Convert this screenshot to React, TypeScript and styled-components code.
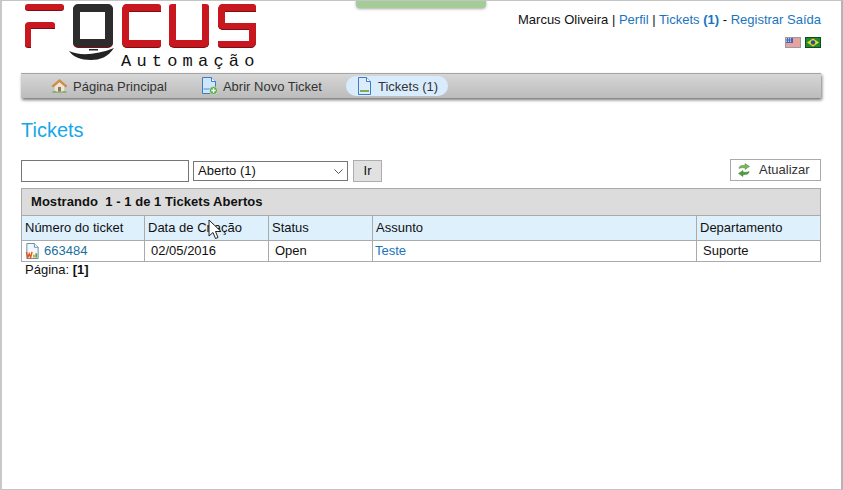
import styled, { createGlobalStyle } from "styled-components";

const GlobalStyle = createGlobalStyle`
  html, body {
    margin: 0;
    padding: 0;
    background: #fff;
  }
  body {
    font-family: "Liberation Sans", Arial, sans-serif;
    font-size: 13px;
    color: #111;
  }
`;

const Frame = styled.div`
  position: relative;
  box-sizing: border-box;
  width: 843px;
  height: 490px;
  overflow: hidden;
  background: #fff;
  border-top: 1px solid #c4c4c4;
  border-bottom: 1px solid #c4c4c4;
  border-left: 2px solid #c8c8c8;
  border-right: 2px solid #b4b4b4;
  padding: 0 20px 0 19px;
`;

const GreenTab = styled.div`
  position: absolute;
  left: 354px;
  top: -1px;
  width: 130px;
  height: 8px;
  background: #a3cc96;
  border-radius: 0 0 4px 4px;
  box-shadow: 0 1px 3px rgba(0, 0, 0, 0.35);
`;

const Header = styled.header`
  display: flex;
  justify-content: space-between;
  height: 72px;
`;

const Logo = styled.div`
  width: 231px;
  margin-left: 4px;
  padding-top: 3px;
`;

const LogoLetters = styled.div`
  display: flex;
  justify-content: space-between;
  height: 43px;
  filter: drop-shadow(0 1px 0 #7c0d12);
`;

const RED = "#c9171f";

const LetterF = styled.div`
  width: 39px;
  display: flex;
  flex-direction: column;
  justify-content: space-between;
`;

const FTop = styled.div`
  height: 6px;
  background: ${RED};
  border-radius: 3px;
`;

const FBottom = styled.div`
  box-sizing: border-box;
  width: 30px;
  height: 25px;
  border-top: 6px solid ${RED};
  border-left: 6px solid ${RED};
  border-radius: 4px 3px 0 3px;
`;

const Monitor = styled.div`
  box-sizing: border-box;
  width: 40px;
  height: 43px;
  background: #fff;
  border: solid #2c2c2c;
  border-width: 8px 8px 8px 7px;
  border-radius: 5px;
`;

const LetterC = styled.div`
  box-sizing: border-box;
  width: 39px;
  border: solid ${RED};
  border-width: 7px 0 7px 7px;
  border-radius: 5px 3px 3px 5px;
`;

const LetterU = styled.div`
  box-sizing: border-box;
  width: 40px;
  border: solid ${RED};
  border-width: 0 7px 7px 7px;
  border-radius: 3px 3px 5px 5px;
`;

const LetterS = styled.div`
  width: 38px;
  display: flex;
  flex-direction: column;
`;

const SUpper = styled.div`
  box-sizing: border-box;
  height: 25px;
  border: solid ${RED};
  border-width: 7px 0 6px 7px;
  border-radius: 5px 3px 0 5px;
`;

const SLower = styled.div`
  box-sizing: border-box;
  height: 18px;
  border: solid ${RED};
  border-width: 0 7px 6px 0;
  border-radius: 0 0 5px 3px;
`;

const LogoBottom = styled.div`
  display: flex;
  align-items: flex-start;
  margin-left: 43px;
  margin-top: 1px;
  gap: 6px;
`;

const Swoosh = styled.svg`
  flex: none;
  margin-top: -1px;
`;

const LogoWord = styled.span`
  font-family: "Liberation Mono", monospace;
  font-size: 17px;
  line-height: 17px;
  margin-top: 5px;
  letter-spacing: 5.2px;
  color: #111;
  white-space: nowrap;
`;

const UserBox = styled.div`
  display: flex;
  flex-direction: column;
  align-items: flex-end;
  padding-top: 11px;
  font-size: 13px;
  line-height: 15px;
  white-space: nowrap;
`;

const Flags = styled.div`
  display: flex;
  gap: 4px;
  margin-top: 10px;
`;

const Link = styled.a`
  color: #1a74bd;
  text-decoration: none;
`;

const NavBar = styled.nav`
  display: flex;
  align-items: center;
  box-sizing: border-box;
  height: 25px;
  padding-left: 24px;
  border-top: 1px solid #a5a5a5;
  background: linear-gradient(#d6d6d6, #bcbcbc);
  box-shadow: 1px 2px 3px rgba(0, 0, 0, 0.55);
`;

const NavItem = styled.a<{ $active?: boolean }>`
  display: flex;
  align-items: center;
  gap: ${(p) => (p.$active ? "6px" : "5px")};
  height: 20px;
  margin-right: ${(p) => (p.$active ? "0" : "22px")};
  padding: ${(p) => (p.$active ? "0 10px 0 11px" : "0 6px")};
  margin-left: ${(p) => (p.$active ? "-4px" : "0")};
  border-radius: 10px;
  background: ${(p) => (p.$active ? "#d9ecfd" : "transparent")};
  color: #333;
  font-size: 13px;
  white-space: nowrap;
`;

const PageTitle = styled.h1`
  margin: 20px 0 18px;
  font-size: 20px;
  font-weight: normal;
  line-height: 24px;
  color: #16a7e8;
`;

const Toolbar = styled.form`
  display: flex;
  align-items: center;
  height: 22px;
  margin-bottom: 6px;
`;

const SearchInput = styled.input`
  box-sizing: border-box;
  width: 168px;
  height: 22px;
  margin: 0 4px 0 0;
  padding: 0 4px;
  border: 1px solid #767676;
  background: #fff;
`;

const chevron = encodeURIComponent(
  '<svg xmlns="http://www.w3.org/2000/svg" width="9" height="5" viewBox="0 0 9 5"><path d="M.5.500 4.500 4.500 8.500.5" fill="none" stroke="#555" /></svg>'
);

const StatusSelect = styled.select`
  box-sizing: border-box;
  width: 155px;
  height: 20px;
  margin: 0 5px 0 0;
  padding: 0 0 1px 4px;
  border: 1px solid #767676;
  border-radius: 0;
  appearance: none;
  background: #fff url("data:image/svg+xml,${chevron}") no-repeat right 4px center;
  font-family: inherit;
  font-size: 13px;
  color: #111;
`;

const GoButton = styled.button`
  box-sizing: border-box;
  width: 29px;
  height: 22px;
  padding: 0 0 1px;
  border: 1px solid #adadad;
  background: #e1e1e1;
  font-family: inherit;
  font-size: 13px;
  color: #111;
`;

const RefreshButton = styled.a`
  display: flex;
  align-items: center;
  gap: 8px;
  box-sizing: border-box;
  width: 91px;
  height: 22px;
  margin: -2px 0 0 auto;
  padding: 0 0 1px 6px;
  border: 1px solid #aaa;
  color: #333;
  font-size: 13px;
`;

const TicketTable = styled.table`
  width: 799px;
  table-layout: fixed;
  border-collapse: collapse;
  font-size: 13px;
`;

const CaptionCell = styled.th`
  height: 25px;
  padding: 0 0 1px 9px;
  border: 1px solid #aaa;
  background: #dcdcdc;
  font-weight: bold;
  letter-spacing: 0.05px;
  text-align: left;
  white-space: pre;
`;

const HeadCell = styled.th`
  height: 23px;
  padding: 0 0 1px 3px;
  border: 1px solid #aaa;
  background: #dff0fd;
  font-weight: normal;
  text-align: left;
`;

const BodyCell = styled.td<{ $inset?: boolean }>`
  height: 19px;
  padding: 0 0 1px ${(p) => (p.$inset ? "6px" : "2px")};
  border: 1px solid #aaa;
  line-height: 15px;
  white-space: nowrap;
`;

const TicketLink = styled.a`
  display: flex;
  align-items: center;
  gap: 4px;
  height: 16px;
  padding-left: 1px;
  color: #1b6f9e;
`;

const Pager = styled.div`
  margin: 0 0 0 4px;
  line-height: 15px;
`;

const Cursor = styled.svg`
  position: absolute;
  left: 205px;
  top: 218px;
`;

const HomeIcon = () => (
  <svg width="17" height="16" viewBox="0 0 18 16">
    <path d="M1 8 9 1l8 7-1.500 1L9 3.500 2.500 9Z" fill="#d98f3d" stroke="#b46f2a" strokeWidth=".5" />
    <path d="M4 8.500 9 4.400l5 4.100V14H4Z" fill="#f2e6cf" />
    <rect x="7.400" y="9" width="3.200" height="5" fill="#8a7a68" />
    <path d="M1 15c1-1.600 4-1.600 5-1h6c1-.6 4-.6 5 1Z" fill="#5ea33f" />
  </svg>
);

const NewDocIcon = () => (
  <svg width="17" height="18" viewBox="0 0 17 18">
    <path d="M1.500.5h9l4 4v12h-13Z" fill="#cfe5fa" stroke="#3d7cc0" />
    <path d="M10.500.5v4h4" fill="#fff" stroke="#3d7cc0" />
    <rect x="2.500" y="11" width="8" height="2" fill="#8fbce6" />
    <circle cx="12.500" cy="13.500" r="4" fill="#5dab4a" stroke="#e8f5e2" strokeWidth=".6" />
    <path d="M12.500 11.300v4.400M10.300 13.500h4.400" stroke="#fff" strokeWidth="1.400" />
  </svg>
);

const DocIcon = () => (
  <svg width="15" height="18" viewBox="0 0 15 18">
    <path d="M1.500.5h8l4 4v13h-12Z" fill="#dcecfb" stroke="#3d7cc0" />
    <path d="M9.500.5v4h4" fill="#fff" stroke="#3d7cc0" />
    <rect x="3" y="13" width="9" height="2" fill="#7fae52" />
  </svg>
);

const SheetIcon = () => (
  <svg width="15" height="16" viewBox="0 0 15 17">
    <path d="M1.500.5h8l4 4v12h-12Z" fill="#f3f7fb" stroke="#5d87ad" />
    <path d="M9.500.5v4h4" fill="#fff" stroke="#5d87ad" />
    <path d="M1 9.500l1.500 6 1.500-4 1.500 4 1.500-6" fill="none" stroke="#e2581e" strokeWidth="1.500" />
    <rect x="8" y="12.500" width="2" height="3" fill="#e6a11f" />
    <rect x="10.500" y="11" width="2" height="4.500" fill="#5aa33f" />
  </svg>
);

const RefreshIcon = () => (
  <svg width="14" height="14" viewBox="0 0 14 14">
    <path d="M2 5.500c0-2 1.500-3 3.500-3H8V.5L12.500 3.500 8 6.500V4.700H5.500C4 4.700 3 5 2 5.500Z" fill="#74b85e" stroke="#4d8f3c" strokeWidth=".5" />
    <path d="M12 8.500c0 2-1.500 3-3.500 3H6v2L1.500 10.500 6 7.500v1.800h2.500c1.500 0 2.500-.3 3.500-.8Z" fill="#4f9d41" stroke="#3c7d30" strokeWidth=".5" />
  </svg>
);

const UsFlag = () => (
  <svg width="16" height="11" viewBox="0 0 16 11">
    <rect width="16" height="11" fill="#f3f3f3" />
    <path d="M0 1h16M0 3h16M0 5h16M0 7h16M0 9h16" stroke="#d9534a" strokeWidth="1" />
    <rect width="8" height="6" fill="#4a63b5" />
    <path d="M1 1.500h6M1 3h6M1 4.500h6" stroke="#dfe6f7" strokeWidth=".8" strokeDasharray="1 1" />
    <rect x=".5" y=".5" width="15" height="10" fill="none" stroke="#9a9a9a" />
  </svg>
);

const BrFlag = () => (
  <svg width="16" height="11" viewBox="0 0 16 11">
    <rect width="16" height="11" fill="#1f8a35" />
    <path d="M8 1.500 14 5.500 8 9.500 2 5.500Z" fill="#f2d91e" />
    <circle cx="8" cy="5.500" r="2.300" fill="#2c4f9e" />
    <rect x=".5" y=".5" width="15" height="10" fill="none" stroke="#0f4d1c" />
  </svg>
);

const App = () => {
  return (
    <Frame>
      <GlobalStyle />
      <GreenTab />
      <Header>
        <Logo>
          <LogoLetters>
            <LetterF>
              <FTop />
              <FBottom />
            </LetterF>
            <Monitor />
            <LetterC />
            <LetterU />
            <LetterS>
              <SUpper />
              <SLower />
            </LetterS>
          </LogoLetters>
          <LogoBottom>
            <Swoosh width="47" height="14" viewBox="0 0 47 14">
              <path d="M1 4c10 5 28 4 45-3-6 9-14 12-23 12C13 13 5 10 1 4Z" fill="#222" />
              <path d="M21 2h9v1.500h-9Z" fill="#222" />
            </Swoosh>
            <LogoWord>Automação</LogoWord>
          </LogoBottom>
        </Logo>
        <UserBox>
          <div>
            Marcus Oliveira | <Link href="#">Perfil</Link> | <Link href="#">Tickets <b>(1)</b></Link> - <Link href="#">Registrar Saída</Link>
          </div>
          <Flags>
            <UsFlag />
            <BrFlag />
          </Flags>
        </UserBox>
      </Header>
      <NavBar>
        <NavItem>
          <HomeIcon />
          Página Principal
        </NavItem>
        <NavItem>
          <NewDocIcon />
          Abrir Novo Ticket
        </NavItem>
        <NavItem $active>
          <DocIcon />
          Tickets (1)
        </NavItem>
      </NavBar>
      <PageTitle>Tickets</PageTitle>
      <Toolbar>
        <SearchInput type="text" />
        <StatusSelect defaultValue="open">
          <option value="open">Aberto (1)</option>
        </StatusSelect>
        <GoButton type="button">Ir</GoButton>
        <RefreshButton>
          <RefreshIcon />
          Atualizar
        </RefreshButton>
      </Toolbar>
      <TicketTable>
        <colgroup>
          <col width="123" />
          <col width="124" />
          <col width="104" />
          <col width="324" />
          <col width="124" />
        </colgroup>
        <thead>
          <tr>
            <CaptionCell colSpan={5}>Mostrando  1 - 1 de 1 Tickets Abertos</CaptionCell>
          </tr>
          <tr>
            <HeadCell>Número do ticket</HeadCell>
            <HeadCell>Data de Criação</HeadCell>
            <HeadCell>Status</HeadCell>
            <HeadCell>Assunto</HeadCell>
            <HeadCell>Departamento</HeadCell>
          </tr>
        </thead>
        <tbody>
          <tr>
            <BodyCell>
              <TicketLink>
                <SheetIcon />
                663484
              </TicketLink>
            </BodyCell>
            <BodyCell $inset>02/05/2016</BodyCell>
            <BodyCell $inset>Open</BodyCell>
            <BodyCell>
              <Link href="#">Teste</Link>
            </BodyCell>
            <BodyCell $inset>Suporte</BodyCell>
          </tr>
        </tbody>
      </TicketTable>
      <Pager>
        Página: <b>[1]</b>
      </Pager>
      <Cursor width="16" height="22" viewBox="0 0 16 22">
        <path d="M2 1v16l4-3.500 2.500 6 2.500-1-2.500-6H14Z" fill="#fff" stroke="#222" strokeWidth="1" />
      </Cursor>
    </Frame>
  );
};

export default App;
